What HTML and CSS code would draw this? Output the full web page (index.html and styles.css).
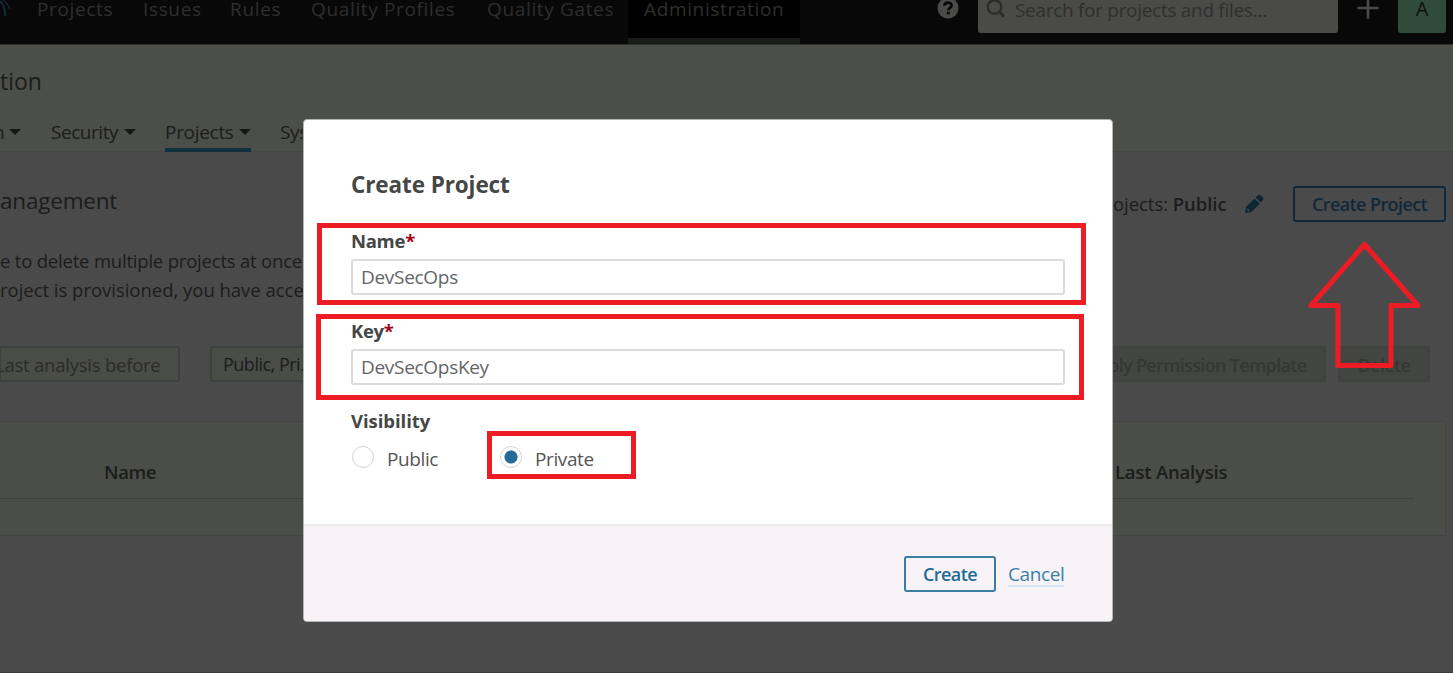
FILE: index.html
```html
<!DOCTYPE html>
<html lang="en">
<head>
<meta charset="utf-8">
<title>Projects Management</title>
<link rel="stylesheet" href="styles.css">
</head>
<body>
<div class="page">
  <nav class="navbar">
    <svg class="logo" width="12" height="20" viewBox="0 0 12 20" fill="none" stroke="#122c38"><path d="M0 1C3 4 5 9 5.500 16" stroke-width="2"/><path d="M3 0C6 2 8 5 10 9" stroke-width="1.200"/></svg>
    <div class="nav-links">
      <a>Projects</a><a>Issues</a><a>Rules</a><a>Quality Profiles</a><a>Quality Gates</a>
    </div>
    <a class="nav-active">Administration</a>
    <svg class="help" width="22" height="22" viewBox="0 0 22 22"><circle cx="11" cy="11" r="10.500" fill="#4a4b49"/><path d="M7.500 8.800C7.500 4.500 14.700 4.600 14.600 8.500C14.500 10.700 11.300 11 11.300 13.200" fill="none" stroke="#080808" stroke-width="2.700"/><rect x="9.900" y="14.600" width="2.900" height="2.700" fill="#080808"/></svg>
    <div class="search">
      <svg width="20" height="20" viewBox="0 0 20 20" fill="none" stroke="#2b2c2b" stroke-width="2.400"><circle cx="8.500" cy="8" r="6.700"/><path d="M13 12.500L18 17.500" stroke-width="3"/></svg>
      <span>Search for projects and files...</span>
    </div>
    <svg class="plus" width="22" height="22" viewBox="0 0 22 22" stroke="#4a4b49" stroke-width="2.600"><path d="M0.500 11H21.500M11 0.500V21.500"/></svg>
    <div class="avatar">A</div>
  </nav>
  <header class="context">
    <h1>tion</h1>
    <div class="tabs">
      <a class="tab t1"><span>n</span><i class="caret"></i></a>
      <a class="tab t2"><span>Security</span><i class="caret"></i></a>
      <a class="tab t3"><span>Projects</span><i class="caret"></i></a>
      <a class="tab t4"><span>System</span></a>
    </div>
  </header>
  <main class="content">
    <div class="title-row">
      <h2>anagement</h2>
      <div class="visibility"><span class="vis-label">ojects: </span><b>Public</b></div>
      <svg class="pencil" width="20" height="20" viewBox="0 0 20 20" fill="#0d2634"><path d="M1 19L2.200 12.800L10.500 4.500L15.800 9.700L7.300 18L1 19Z"/><path d="M11.600 3.400L14 1.200Q15.400 .100 16.700 1.300L18.900 3.500Q20 4.800 18.900 6.100L16.800 8.500Z"/><path d="M3.200 15L5.200 17" stroke="#4a4a4a" stroke-width="1.300"/></svg>
      <button class="btn btn-dim">Create Project</button>
    </div>
    <p class="desc"><span class="d1">e to delete multiple projects at once</span><br><span class="d2">roject is provisioned, you have acce</span></p>
    <div class="filters">
      <div class="field date">Last analysis before</div>
      <div class="field select">Public, Pri...</div>
      <div class="disabled apply">ply Permission Template</div>
      <div class="disabled delete">Delete</div>
    </div>
    <section class="panel">
      <div class="thead"><span class="th-name">Name</span><span class="th-last">Last Analysis</span></div>
    </section>
  </main>
</div>
<div class="modal">
  <div class="modal-body">
    <h3>Create Project</h3>
    <label class="lbl">Name<em>*</em></label>
    <div class="input"><span>DevSecOps</span></div>
    <label class="lbl">Key<em>*</em></label>
    <div class="input"><span>DevSecOpsKey</span></div>
    <label class="lbl lbl-vis">Visibility</label>
    <div class="radios">
      <div class="radio-item"><i class="radio"></i><span>Public</span></div>
      <div class="radio-item"><i class="radio checked"></i><span>Private</span></div>
    </div>
  </div>
  <footer class="modal-foot">
    <button class="btn">Create</button><a class="cancel">Cancel</a>
  </footer>
</div>
<div class="mark mark-name"></div>
<div class="mark mark-key"></div>
<div class="mark mark-private"></div>
<svg class="arrow" width="114" height="130" viewBox="0 0 114 130" fill="none" stroke="#ed1c24" stroke-width="5" stroke-linejoin="round"><path d="M57.500 4.500L4 65.500H31V125.500H84V65.500H111Z"/></svg>
</body>
</html>
```
FILE: styles.css
```css
* { box-sizing: border-box; }
body { margin: 0; width: 1453px; height: 673px; overflow: hidden; position: relative; background: #4a4a4a; font: 18.500px/24px "Open Sans", "Noto Sans", sans-serif; letter-spacing: -.3px; color: #1b1c1b; }
h1, h2, h3, p { margin: 0; font-weight: 400; }
span, a, h1, h2, button { white-space: nowrap; }
.page { width: 1453px; height: 673px; overflow: hidden; border-bottom: 1px solid #3c3a3c; }
.navbar { display: flex; height: 45px; background: #080808; border-bottom: 1px solid #30312f; color: #2e2f2e; }
.logo { width: 12px; flex: none; margin-right: 25px; }
.nav-links { display: grid; grid-template-columns: 106px 87px 81px 176px 141px; font-size: 19px; letter-spacing: .65px; line-height: 18px; }
.nav-active { width: 172px; height: 44px; margin-right: 137px; padding-left: 16px; background: #000; border-bottom: 6px solid #191c18; font-size: 19px; letter-spacing: .65px; line-height: 18px; }
.help { flex: none; margin-top: -3px; }
.search { display: flex; width: 360px; height: 33px; margin-left: 19px; background: #4a4b48; border-radius: 0 0 3px 3px; flex: none; }
.search svg { margin: -1px 9px 0 8px; flex: none; }
.search span { line-height: 21px; font-size: 19px; letter-spacing: -.3px; }
.plus { flex: none; margin: -3px 19px 0 19px; }
.avatar { width: 48px; height: 33px; background: #304b39; border-radius: 0 0 3px 3px; text-align: center; font-size: 20px; line-height: 18px; color: #0c120e; }
.context { height: 107px; background: #4c4e4a; border-bottom: 1px solid #474747; }
h1 { height: 75px; padding-top: 23px; font-size: 23px; line-height: 27px; letter-spacing: 0; }
.tabs { display: flex; height: 32px; }
.tab { display: flex; height: 32px; line-height: 24px; font-size: 19px; }
.tab .caret { margin: 9px 0 0 auto; }
.caret { width: 0; height: 0; border: 6px solid transparent; border-top-color: #151615; border-bottom: 0; }
.t1 { width: 21px; margin-right: 30px; } .t1 span { margin-left: -7px; }
.t2 { width: 85px; margin-right: 29px; letter-spacing: -.45px; }
.t3 { width: 86px; margin-right: 29px; border-bottom: 4px solid #12303d; }
.title-row { display: flex; height: 86px; }
h2 { width: 1113px; padding-top: 36px; font-size: 22.500px; line-height: 26px; letter-spacing: -.2px; }
.visibility { width: 131px; padding-top: 40px; letter-spacing: -.05px; }
.visibility b { font-weight: 600; }
.pencil { margin-top: 42px; flex: none; }
.btn { height: 36px; padding: 0; font: 600 18px/33px "Open Sans", "Noto Sans", sans-serif; letter-spacing: -.6px; color: #236a97; background: transparent; border: 2px solid #3c7ea3; border-radius: 3px; width: 92px; }
.btn-dim { width: 153px; margin: 34px 0 0 29px; color: #10283a; border-color: #10283a; }
.desc { height: 108px; padding-top: 9px; line-height: 28.500px; white-space: nowrap; }
.d1 { letter-spacing: -.2px; }
.d2 { letter-spacing: -.02px; }
.filters { display: flex; height: 36px; }
.field { height: 36px; border: 2px solid #3e403e; border-radius: 3px; background: #4a4c48; line-height: 33px; white-space: nowrap; }
.date { width: 181px; margin: 0 30px 0 -1px; text-indent: -6px; letter-spacing: -.23px; color: #2a2b2a; }
.select { width: 140px; margin-right: 753px; padding-left: 11px; font-size: 18px; letter-spacing: -.5px; }
.disabled { height: 36px; background: #424541; border: 1px solid #3f413f; border-radius: 2px; color: #353735; font-weight: 600; font-size: 18px; letter-spacing: -.65px; line-height: 36px; white-space: nowrap; }
.apply { width: 223px; padding-left: 4px; margin-right: 12px; }
.delete { width: 92px; text-align: center; }
.panel { height: 115px; width: 1447px; margin: 39px 0 0 -1px; padding-right: 31px; background: #4b4d48; border: 1px solid #434443; }
.thead { display: flex; height: 77px; border-bottom: 1px solid #3e403e; padding-top: 38px; font-weight: 600; }
.th-name { width: 1011px; padding-left: 104px; margin-right: 104px; }
.th-last { letter-spacing: -.2px; }
.modal { position: absolute; left: 303px; top: 119px; width: 810px; height: 503px; background: #fff; border: 1px solid #b5b5b5; border-radius: 4px; overflow: hidden; color: #555; }
.modal-body { height: 404px; padding: 51px 47px 0; }
h3 { height: 58px; font-size: 22.500px; line-height: 28px; letter-spacing: -.1px; font-weight: 700; color: #444745; }
.lbl { display: block; height: 30px; font-weight: 700; color: #444745; }
.lbl-vis { letter-spacing: -.05px; }
.lbl em { color: #a4030f; font-style: normal; }
.input { height: 36px; margin-bottom: 24px; padding-left: 8px; border: 2px solid #dcdcdc; border-radius: 3px; font-size: 19px; line-height: 33px; color: #656565; }
.radios { display: flex; height: 32px; padding-left: 1px; }
.radio-item { display: flex; width: 148px; height: 39px; align-items: center; gap: 13px; font-size: 19px; letter-spacing: -.4px; }
.radio { width: 22px; height: 22px; margin-top: -4px; border: 1px solid #d8d4d8; border-radius: 50%; background: #fff; }
.checked { background: radial-gradient(circle, #236a97 0 6px, #fff 7px); }
.modal-foot { display: flex; align-items: center; height: 97px; padding: 0 47px 0 600px; gap: 12px; background: #f7f3f7; border-top: 2px solid #ebebed; }
.cancel { color: #3c7ea8; font-size: 19px; letter-spacing: -.4px; line-height: 22px; padding-top: 1px; margin-bottom: -1px; border-bottom: 2px solid #d5e6f3; }
.mark { position: absolute; border: 5px solid #ed1c24; }
.mark-name { left: 317px; top: 223px; width: 769px; height: 82px; }
.mark-key { left: 316px; top: 314px; width: 768px; height: 86px; }
.mark-private { left: 487px; top: 431px; width: 149px; height: 48px; }
.arrow { position: absolute; left: 1307px; top: 240px; }
```
